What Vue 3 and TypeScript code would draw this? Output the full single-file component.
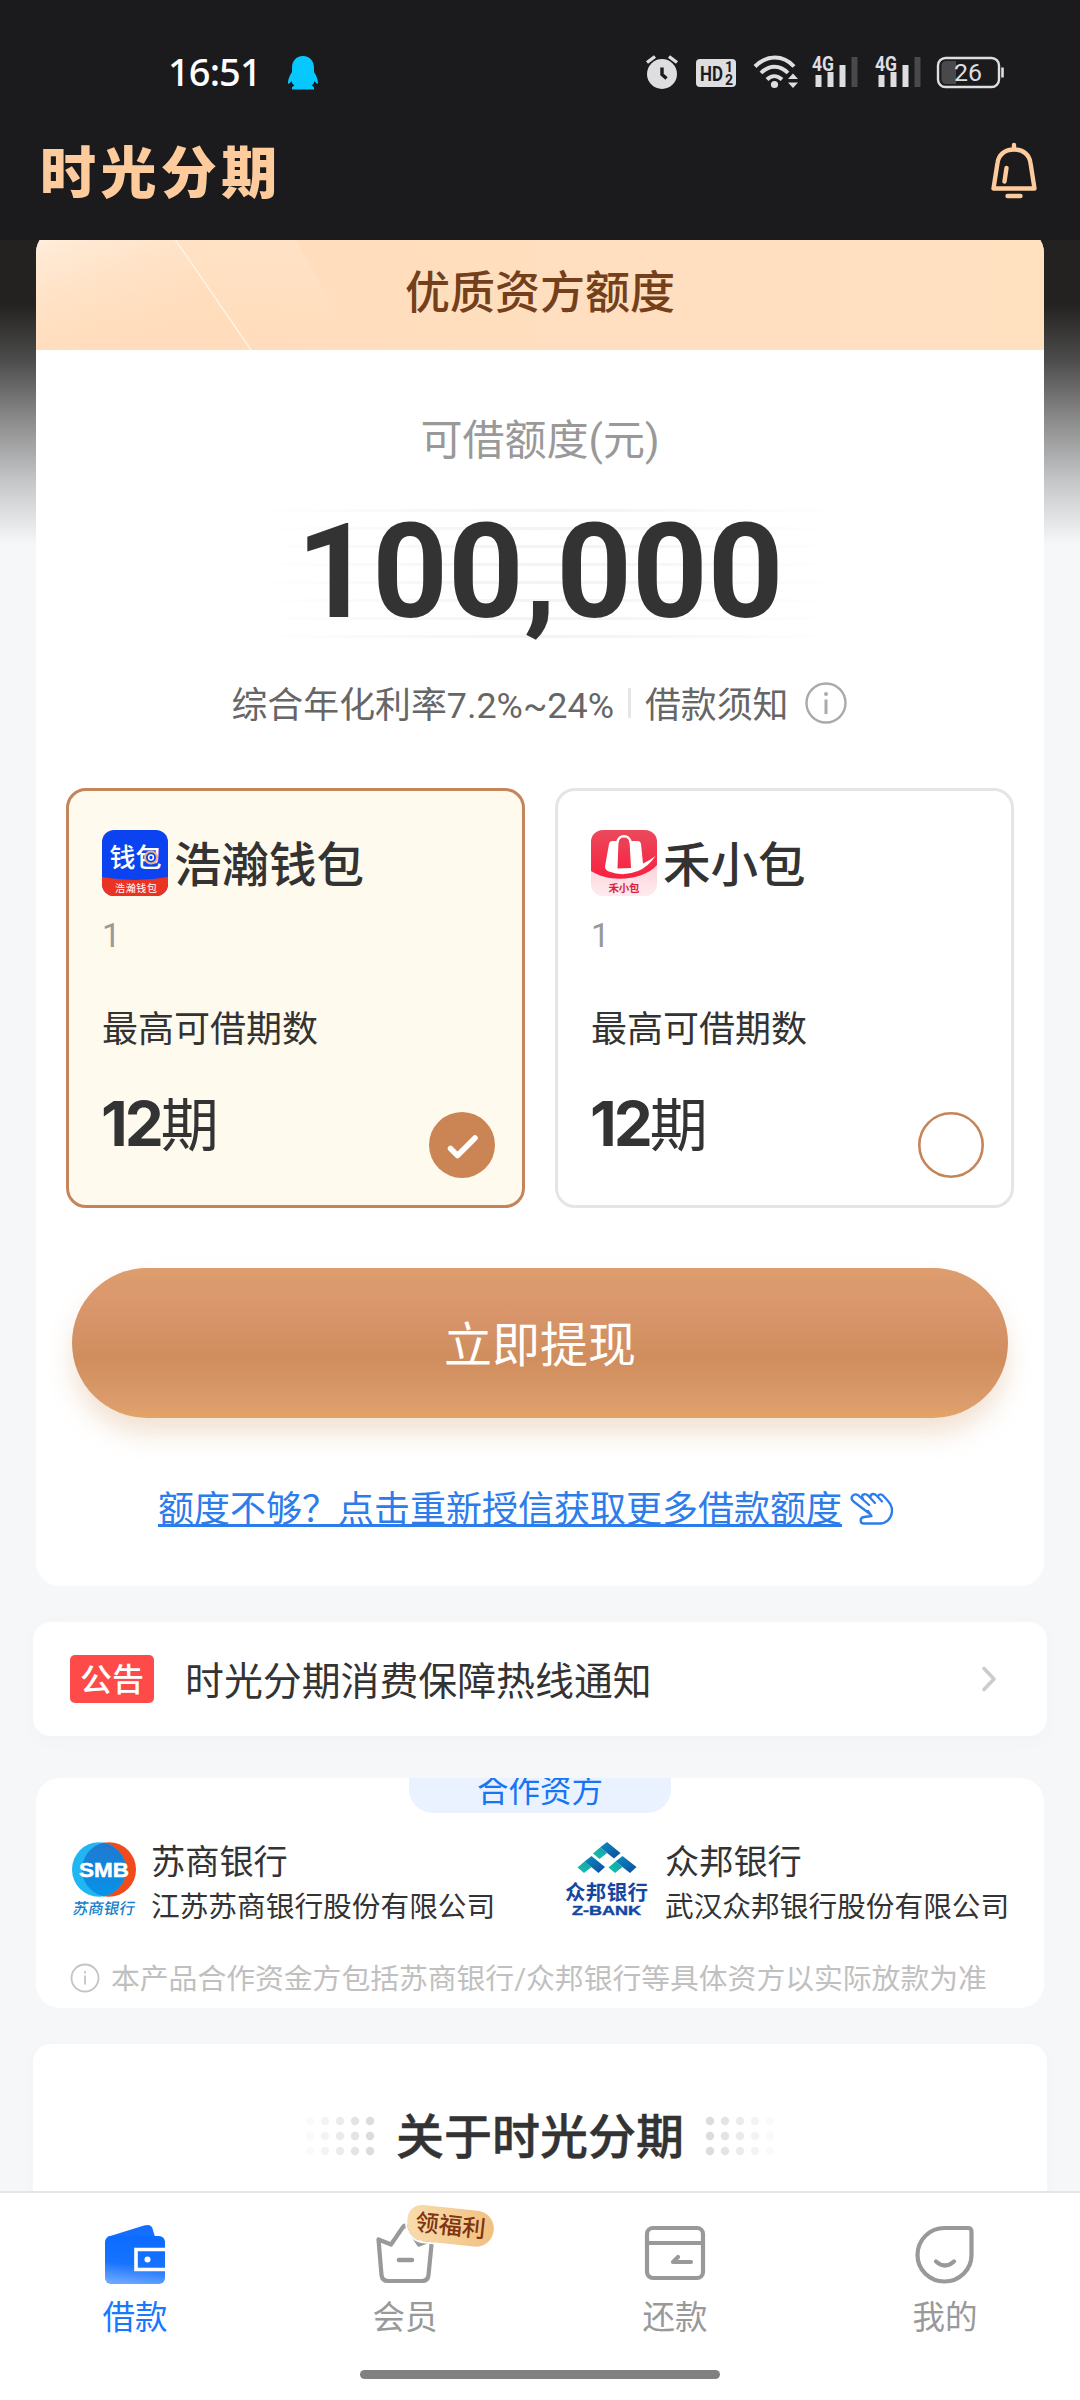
<script setup lang="ts">
interface Lender {
  id: string
  name: string
  remark: string
  periods: number
}

interface Tab {
  id: string
  label: string
  badge?: string
}

const lenders: Lender[] = [
  { id: 'haohan', name: '浩瀚钱包', remark: '1', periods: 12 },
  { id: 'hexiao', name: '禾小包', remark: '1', periods: 12 },
]
const selected = 'haohan'

const tabs: Tab[] = [
  { id: 'loan', label: '借款' },
  { id: 'vip', label: '会员', badge: '领福利' },
  { id: 'repay', label: '还款' },
  { id: 'mine', label: '我的' },
]
const activeTab = 'loan'

const amountLines = [0, 1, 2, 3, 4, 5, 6, 7]
const dotCols = [0, 1, 2, 3, 4]
const dotRows = [0, 1, 2]
const dotOpacity = [0.12, 0.3, 0.5, 0.7, 0.9]
</script>

<template>
  <div class="page">
    <header class="top">
      <div class="status">
        <span class="time">16:51</span>
        <svg class="qq" width="32" height="36" viewBox="0 0 32 36">
          <path d="M16 1C9 1 5 6 5 13v4C3 20 .8 24 1 28.500c1 .8 2.500-1 3.500-2.500.5 2 1.500 3.500 3 4.500-2 .8-3 1.800-2.500 4h22c.5-2.200-.5-3.200-2.500-4 1.500-1 2.500-2.500 3-4.500 1 1.500 2.500 3.300 3.500 2.500.2-4.500-2-8.500-4-11.500v-4C27 6 23 1 16 1z" fill="#06c8ff" />
        </svg>
        <svg class="sys" width="366" height="40" viewBox="0 0 366 40">
          <g fill="#dedee0">
            <circle cx="20" cy="24" r="15" />
            <path d="M5 12.500L13 6.500M27 6.500L35 12.500" stroke="#dedee0" stroke-width="3.400" fill="none" />
            <path d="M20 17.500v7l4.500 4" stroke="#1b1b1d" stroke-width="3.400" fill="none" />
            <rect x="54" y="9" width="40" height="28" rx="4" />
            <text x="58" y="30.500" font-size="21" font-weight="700" fill="#1b1b1d" textLength="23" lengthAdjust="spacingAndGlyphs">HD</text>
            <text x="83" y="22" font-size="14" font-weight="700" fill="#1b1b1d">1</text>
            <text x="83" y="35" font-size="14" font-weight="700" fill="#1b1b1d">2</text>
            <g fill="none" stroke="#dedee0" stroke-width="4">
              <path d="M113 16.500c12-12 28-12 39 0" />
              <path d="M119 23c8-8.500 19-8.500 27 0" />
              <path d="M125 29.500c4.500-4.500 10-4.500 15 0" />
            </g>
            <circle cx="132.500" cy="34.500" r="3.600" />
            <path d="M146 29l5-5.500 5 5.500zM146 32.500h10l-5 5.500z" />
            <g v-for="x in [170, 233]" :key="x">
              <text :x="x" y="21" font-size="21" font-weight="700" textLength="22" lengthAdjust="spacingAndGlyphs">4G</text>
              <rect :x="x + 3.500" y="25" width="6" height="12" />
              <rect :x="x + 15.500" y="22" width="6" height="15" />
              <rect :x="x + 27.500" y="15" width="6" height="22" />
              <rect :x="x + 39.500" y="7" width="6" height="30" fill="#49494b" />
            </g>
            <rect x="296" y="8" width="61" height="29" rx="7.500" fill="none" stroke="#dedee0" stroke-width="2.400" />
            <path d="M304 11h10v23h-10a4.500 4.500 0 0 1-4.500-4.500v-14A4.500 4.500 0 0 1 304 11z" fill="#49494b" />
            <path d="M360.500 17.500v10" stroke="#dedee0" stroke-width="2.600" />
            <text x="312" y="31" font-size="24" textLength="28" lengthAdjust="spacingAndGlyphs">26</text>
          </g>
        </svg>
      </div>
      <div class="title-row">
        <h1>时光分期</h1>
        <svg width="48" height="58" viewBox="0 0 48 58" fill="none" stroke="#fdcb9c" stroke-width="4.400" stroke-linecap="round" stroke-linejoin="round">
          <path d="M24 4v4M24 8.500c-9.500 0-15.500 5.500-16.500 13.500L3.500 47.500h41L40.500 22C39.500 14 33.500 8.500 24 8.500zM16.500 27L14.500 40.500" />
          <path d="M17.500 55h13" />
        </svg>
      </div>
    </header>

    <main class="content">
      <section class="card quota">
        <div class="banner">
          <svg class="shine" width="360" height="121" viewBox="0 0 360 121">
            <defs>
              <linearGradient id="shineA" x1="0" y1="0" x2="0.7" y2="1">
                <stop offset="0" stop-color="#fff" stop-opacity=".55" />
                <stop offset="1" stop-color="#ffdcba" stop-opacity="0" />
              </linearGradient>
              <linearGradient id="shineB" x1="0.3" y1="0" x2="0.3" y2="1">
                <stop offset="0" stop-color="#fff" stop-opacity=".16" />
                <stop offset=".9" stop-color="#fff" stop-opacity="0" />
              </linearGradient>
            </defs>
            <path d="M0 0H132L215 121H0z" fill="url(#shineA)" />
            <path d="M132 0H254L320 121H215z" fill="url(#shineB)" />
            <path d="M132 0L215 121" stroke="#fff3e2" stroke-width="1.500" />
          </svg>
          <span>优质资方额度</span>
        </div>
        <p class="quota-label">可借额度(元)</p>
        <div class="amount">
          <div class="lines"><i v-for="l in amountLines" :key="l" /></div>
          <strong>100,000</strong>
        </div>
        <div class="rate">
          <span>综合年化利率7.2%~24%</span>
          <i class="sep" />
          <span>借款须知</span>
          <svg width="42" height="42" viewBox="0 0 42 42" fill="none" stroke="#aaa">
            <circle cx="21" cy="21" r="19.500" stroke-width="2.400" />
            <path d="M21 17.500v14.500" stroke-width="3" />
            <circle cx="21" cy="12" r="2" fill="#aaa" stroke="none" />
          </svg>
        </div>

        <div class="lenders">
          <article v-for="l in lenders" :key="l.id" class="lender" :class="{ on: l.id === selected }">
            <div class="lender-head">
              <svg v-if="l.id === 'haohan'" width="66" height="66" viewBox="0 0 66 66">
                <clipPath id="appA"><rect width="66" height="66" rx="12" /></clipPath>
                <g clip-path="url(#appA)">
                  <rect width="66" height="66" fill="#0b43f0" />
                  <path d="M0 47Q33 53 66 47V66H0z" fill="#ea3323" />
                  <text x="7.500" y="36.500" font-size="26" font-weight="500" fill="#fff" textLength="52">钱包</text>
                  <circle cx="49" cy="27.500" r="6" fill="#0b43f0" stroke="#f2b07a" stroke-width="2" />
                  <circle cx="49" cy="27.500" r="2.400" fill="none" stroke="#fff" stroke-width="1.500" />
                  <text x="13" y="62" font-size="10" fill="#fff" textLength="42">浩瀚钱包</text>
                </g>
              </svg>
              <svg v-else width="66" height="66" viewBox="0 0 66 66">
                <defs>
                  <clipPath id="appB"><rect width="66" height="66" rx="12" /></clipPath>
                  <linearGradient id="red" x1="0" y1="0" x2="0" y2="1">
                    <stop offset="0" stop-color="#e94a5c" />
                    <stop offset="1" stop-color="#fa1f3f" />
                  </linearGradient>
                  <linearGradient id="pink" x1="0" y1="0" x2="0" y2="1">
                    <stop offset="0" stop-color="#fdb9c4" />
                    <stop offset="1" stop-color="#fdebee" />
                  </linearGradient>
                </defs>
                <g clip-path="url(#appB)">
                  <rect width="66" height="66" fill="url(#pink)" />
                  <path d="M0 0H66V35C52 51 18 53 0 41z" fill="url(#red)" />
                  <path d="M18 14q.5-3 3.500-3h6l-1 27.500 13.500-.5L38.500 11h8q3 0 3.500 3l2 19.500Q58 31 64.500 26 57 37 47 41 32 47 18 41.500q-4-1.500-4-5z" fill="#fff" />
                  <path d="M26.500 13c0-9 13-9 13 0" fill="none" stroke="#fff" stroke-width="2.400" />
                  <path d="M29.500 9h7v4h-7z" fill="#ea3f55" />
                  <text x="17.500" y="62" font-size="10.500" font-weight="700" fill="#d92341" textLength="31">禾小包</text>
                </g>
              </svg>
              <h2>{{ l.name }}</h2>
            </div>
            <p class="remark">{{ l.remark }}</p>
            <p class="term-label">最高可借期数</p>
            <div class="term">
              <p><b>{{ l.periods }}</b>期</p>
              <svg width="66" height="66" viewBox="0 0 66 66" fill="none">
                <template v-if="l.id === selected">
                  <circle cx="33" cy="33" r="33" fill="#cb8555" />
                  <path d="M21.500 36.500L28.500 43.500 46 26" stroke="#fff" stroke-width="5.500" stroke-linecap="round" stroke-linejoin="round" />
                </template>
                <circle v-else cx="33" cy="33" r="31.700" stroke="#c5855a" stroke-width="2.600" />
              </svg>
            </div>
          </article>
        </div>

        <button class="cta">立即提现</button>

        <div class="more">
          <a>额度不够？点击重新授信获取更多借款额度</a>
          <svg width="44" height="34" viewBox="0 0 44 34" fill="none" stroke="#2c7cec" stroke-width="2.300" stroke-linecap="round" stroke-linejoin="round">
            <path d="M20 22L3.500 9.500C-1 5 4 .5 8.500 3.500L19 13M13 7c-3-4.500 2-6 5-3.500l7 7.500M20.500 5c0-4 4-3.500 6-1.500l5.500 6M28 4.500c1-3 4-2.500 6 0C38 9 43 13.500 42 20c-1 7-6 11.500-12 11.500H14c-4.500 0-4.500-6 0-6.500l7.500-1L18 19" />
          </svg>
        </div>
      </section>

      <section class="wide notice">
        <span class="tag">公告</span>
        <p>时光分期消费保障热线通知</p>
        <svg width="18" height="28" viewBox="0 0 18 28" fill="none" stroke="#ccc" stroke-width="3.600" stroke-linecap="round" stroke-linejoin="round"><path d="M4 3.500L14 14 4 24.500" /></svg>
      </section>

      <section class="card partners">
        <div class="partner-tab"><span>合作资方</span></div>
        <div class="partner-row">
          <div class="partner first">
            <svg width="68" height="78" viewBox="0 0 68 78">
              <defs>
                <linearGradient id="smb" x1="0" y1="0" x2="0" y2="1"><stop offset="0" stop-color="#2078d0" /><stop offset="1" stop-color="#0693e8" /></linearGradient>
              </defs>
              <ellipse cx="39" cy="28.500" rx="27" ry="27.300" fill="#f04a1d" />
              <ellipse cx="29" cy="28.500" rx="27" ry="27.300" fill="#20b6f2" />
              <path d="M34 1.700C46 4 56 15 56 28.500S46 53 34 55.300C22 53 12 42 12 28.500S22 4 34 1.700z" fill="url(#smb)" />
              <text class="latin" x="9" y="36" font-size="21" font-weight="700" fill="#fff" stroke="#fff" stroke-width=".5" textLength="50" lengthAdjust="spacingAndGlyphs">SMB</text>
              <text x="2" y="73.500" font-size="15.500" font-weight="500" fill="#1780c8" transform="translate(13 0) skewX(-10)" textLength="62">苏商银行</text>
            </svg>
            <div>
              <h3>苏商银行</h3>
              <p>江苏苏商银行股份有限公司</p>
            </div>
          </div>
          <div class="partner second">
            <svg width="84" height="78" viewBox="0 0 84 78">
              <defs>
                <linearGradient id="zb" x1="0" y1="0" x2="1" y2="1"><stop offset="0" stop-color="#0b8fc0" /><stop offset="1" stop-color="#0d4a9e" /></linearGradient>
                <linearGradient id="zg" x1="1" y1="0" x2="0" y2="1"><stop offset="0" stop-color="#12a0b5" /><stop offset="1" stop-color="#16c3a0" /></linearGradient>
              </defs>
              <path d="M42 1L55.500 12 49 17.500 35 6.500z" fill="url(#zb)" />
              <path d="M35 6.500L42 12 34.500 18 28 12.500z" fill="url(#zg)" />
              <path d="M26.500 15L40 26 33.500 32 19.500 20.500z" fill="url(#zb)" />
              <path d="M19.500 20.500L26.500 26 19 32 12.500 26.500z" fill="url(#zg)" />
              <path d="M57.500 15L71.500 26 65 32 50.500 20.500z" fill="url(#zb)" />
              <path d="M50.500 20.500L57.500 26 50 32 43.500 26.500z" fill="url(#zg)" />
              <text x="0" y="59" font-size="20.500" font-weight="700" fill="#1347a0" textLength="83">众邦银行</text>
              <text class="latin" x="7" y="73.500" font-size="13" font-weight="700" fill="#1347a0" stroke="#1347a0" stroke-width=".4" textLength="69" lengthAdjust="spacingAndGlyphs">Z-BANK</text>
            </svg>
            <div>
              <h3>众邦银行</h3>
              <p>武汉众邦银行股份有限公司</p>
            </div>
          </div>
        </div>
        <div class="hint">
          <svg width="30" height="30" viewBox="0 0 30 30" fill="none" stroke="#c4c4c4" stroke-width="1.800">
            <circle cx="15" cy="15" r="13.500" />
            <path d="M15 12.500v9M15 8v2.400" />
          </svg>
          <span>本产品合作资金方包括苏商银行/众邦银行等具体资方以实际放款为准</span>
        </div>
      </section>

      <section class="wide about">
        <svg width="72" height="40" viewBox="0 0 72 40" fill="#d8d8d8">
          <template v-for="c in dotCols" :key="c">
            <circle v-for="r in dotRows" :key="r" :cx="6 + c * 15" :cy="5 + r * 15" r="4.200" :opacity="dotOpacity[c]" />
          </template>
        </svg>
        <h2>关于时光分期</h2>
        <svg width="72" height="40" viewBox="0 0 72 40" fill="#d8d8d8">
          <template v-for="c in dotCols" :key="c">
            <circle v-for="r in dotRows" :key="r" :cx="6 + c * 15" :cy="5 + r * 15" r="4.200" :opacity="dotOpacity[4 - c]" />
          </template>
        </svg>
      </section>
    </main>

    <nav class="tabbar">
      <div class="tabs">
        <div v-for="t in tabs" :key="t.id" class="tab" :class="{ active: t.id === activeTab }">
          <div class="tab-icon">
            <svg v-if="t.id === 'loan'" width="66" height="64" viewBox="0 0 66 64">
              <defs>
                <linearGradient id="wal" x1=".6" y1="0" x2=".45" y2="1">
                  <stop offset="0" stop-color="#0b6bff" />
                  <stop offset=".6" stop-color="#1773ff" />
                  <stop offset="1" stop-color="#6ba6ff" />
                </linearGradient>
              </defs>
              <path d="M5 15L42 3.500q7-2 8.500 3L53 15z" fill="#146fff" />
              <rect x="3" y="14" width="60" height="48" rx="6" fill="url(#wal)" />
              <path d="M64 27.500H34v20h30" fill="none" stroke="#fff" stroke-width="3.600" />
              <circle cx="45.500" cy="37.500" r="3" fill="#fff" />
            </svg>
            <svg v-else-if="t.id === 'vip'" width="66" height="64" viewBox="0 0 66 64" fill="none" stroke="#999" stroke-width="4.200" stroke-linejoin="round" stroke-linecap="round">
              <path d="M6.500 17.500L9.500 53q.6 6 6.500 6h34q6 0 6.500-6L60 17.500 47 22.500 35 5q-2-3-4 0L19 22.500z" />
              <path d="M27 38h13" stroke-width="4.600" />
            </svg>
            <svg v-else-if="t.id === 'repay'" width="66" height="64" viewBox="0 0 66 64" fill="none" stroke="#999" stroke-width="4.200" stroke-linejoin="round" stroke-linecap="round">
              <rect x="5" y="6" width="56" height="50" rx="6" />
              <path d="M5 21h56" />
              <path d="M49 40H31l5-5" />
            </svg>
            <svg v-else width="66" height="64" viewBox="0 0 66 64" fill="none" stroke="#999" stroke-width="4.200" stroke-linejoin="round" stroke-linecap="round">
              <path d="M32.500 6H56q3.500 0 3.500 3.500V33a27 26.500 0 0 1-54 0C5.500 18 17.500 6 32.500 6z" />
              <path d="M24 39.500q9 8 18 0" />
            </svg>
            <span v-if="t.badge" class="badge">{{ t.badge }}</span>
          </div>
          <span class="tab-label">{{ t.label }}</span>
        </div>
      </div>
      <div class="home-bar" />
    </nav>
  </div>
</template>

<style>
body {
  background: #f6f7f9;
}
</style>

<style scoped>
* {
  box-sizing: border-box;
  margin: 0;
  padding: 0;
}

svg {
  display: block;
  flex: none;
  overflow: visible;
}

.latin {
  font-family: 'Liberation Sans', sans-serif;
}

.page {
  width: 1080px;
  height: 2400px;
  overflow: hidden;
  display: flex;
  flex-direction: column;
  background: #f6f7f9;
  font-family: Roboto, 'Noto Sans CJK SC', sans-serif;
  color: #333;
}

.top {
  position: relative;
  z-index: 1;
  flex: none;
  height: 240px;
  background: #1b1b1d;
}

.status {
  display: flex;
  align-items: flex-start;
  height: 140px;
  padding: 48px 72px 0 168px;
}

.time {
  width: 92px;
  font-family: 'Noto Sans', Roboto, sans-serif;
  font-size: 38px;
  font-weight: 500;
  line-height: 46px;
  letter-spacing: -0.9px;
  color: #fff;
  white-space: nowrap;
}

.qq {
  margin: 7px 0 0 27px;
}

.sys {
  margin: 2px 0 0 auto;
}

.title-row {
  display: flex;
  justify-content: space-between;
  padding: 0 42px 0 40px;
}

.title-row svg {
  margin-top: 1px;
}

h1 {
  margin-top: 2px;
  font-size: 56px;
  font-weight: 900;
  line-height: 64px;
  letter-spacing: 4.400px;
  color: #fdcb9c;
}

.content {
  flex: 1;
  min-height: 0;
  overflow: hidden;
  margin-top: -11px;
  padding: 0 33px;
  background: linear-gradient(#232220 0, #232220 75px, #4d4d4d 132px, #888 188px, #c4c5c7 251px, #f6f7f9 315px) no-repeat 0 0 / 100% 320px;
}

.card {
  margin: 0 3px;
  border-radius: 24px;
  background: #fff;
  overflow: hidden;
}

.quota {
  height: 1357px;
}

.banner {
  position: relative;
  height: 121px;
  display: flex;
  justify-content: center;
  background: linear-gradient(90deg, #ffdcba, #ffdfc0 60%, #ffe0bf);
  font-size: 45px;
  font-weight: 500;
  line-height: 66px;
  padding-top: 32px;
  color: #74401c;
}

.banner span {
  position: relative;
}

.shine {
  position: absolute;
  left: 0;
  top: 0;
}

.quota-label {
  margin-top: 60px;
  text-align: center;
  font-size: 42px;
  line-height: 62px;
  color: #999;
}

.amount {
  position: relative;
  height: 154px;
  margin-top: 23px;
  text-align: center;
}

.lines {
  position: absolute;
  left: 220px;
  right: 200px;
  top: 14px;
  display: flex;
  flex-direction: column;
  gap: 19px;
}

.lines i {
  height: 3px;
  background: linear-gradient(90deg, transparent, #f2f2f7 50%, transparent);
}

.lines {
  gap: 15px;
}

.amount strong {
  position: relative;
  font-size: 132px;
  font-weight: 700;
  line-height: 154px;
}

.rate {
  display: flex;
  align-items: center;
  justify-content: center;
  height: 54px;
  margin-top: 27px;
  padding-right: 2px;
  font-size: 35.900px;
  line-height: 54px;
  color: #666;
}

.rate span {
  padding-top: 6px;
}

.sep {
  width: 3px;
  height: 30px;
  margin: 0 14px 0 14px;
  background: #e6e6e6;
}

.rate svg {
  margin-left: 16px;
}

.lenders {
  display: flex;
  gap: 30px;
  padding: 0 30px;
  margin-top: 58px;
}

.lender {
  flex: 1;
  height: 420px;
  padding: 39px 27px 0 33px;
  border: 3px solid #e5e5e5;
  border-radius: 20px;
}

.lender.on {
  border-color: #c5855a;
  background: #fffaee;
}

.lender-head {
  display: flex;
  align-items: center;
  gap: 6px;
  height: 66px;
}

h2 {
  font-size: 48px;
  font-weight: 500;
  line-height: 66px;
}

.lender h2 {
  padding-top: 5px;
  font-size: 47.500px;
}

.remark {
  margin-top: 20px;
  font-size: 33px;
  line-height: 40px;
  color: #999;
}

.term-label {
  margin-top: 47px;
  font-size: 36px;
  line-height: 54px;
}

.term {
  display: flex;
  justify-content: space-between;
  margin-top: 24px;
}

.term p {
  padding-top: 5px;
  font-size: 58px;
  line-height: 76px;
  white-space: nowrap;
}

.term b {
  font-family: Inter, sans-serif;
  font-size: 62px;
  font-weight: 700;
  letter-spacing: -3px;
  margin-left: -1px;
}

.term svg {
  margin-top: 31px;
}

.cta {
  display: block;
  width: 936px;
  height: 150px;
  margin: 60px auto 0;
  padding-bottom: 4px;
  border: 0;
  border-radius: 75px;
  font: inherit;
  font-size: 48px;
  color: #fff;
  background: linear-gradient(#dd9d6e, #d9966c 28%, #d08d5d 60%, #dd9d6c 92%, #e4a365);
  box-shadow: 0 16px 24px rgba(205, 145, 90, 0.26);
}

.more {
  display: flex;
  align-items: center;
  margin-top: 65px;
  padding-left: 122px;
  height: 54px;
}

.more a {
  font-size: 36px;
  line-height: 54px;
  color: #2c7cec;
  text-decoration: underline;
  text-decoration-thickness: 3px;
  text-underline-offset: 2px;
}

.more svg {
  margin: -3px 0 0 8px;
}

.wide {
  border-radius: 18px;
  background: #fff;
  box-shadow: 0 4px 20px rgba(0, 0, 0, 0.025);
}

.notice {
  display: flex;
  align-items: center;
  height: 114px;
  margin-top: 36px;
  padding: 0 49px 0 37px;
}

.tag {
  width: 84px;
  height: 48px;
  border-radius: 5px;
  background: #ff4a4a;
  color: #fff;
  font-size: 32px;
  font-weight: 500;
  line-height: 50px;
  text-align: center;
}

.notice p {
  flex: 1;
  margin-left: 31px;
  padding-top: 6px;
  font-size: 38.900px;
  line-height: 58px;
}

.partners {
  height: 230px;
  margin-top: 42px;
}

.partner-tab {
  display: flex;
  justify-content: center;
  align-items: flex-start;
  width: 262px;
  height: 35px;
  margin: 0 auto;
  border-radius: 0 0 24px 24px;
  background: #ebf2ff;
  font-size: 31.500px;
  line-height: 27px;
  color: #1775f5;
}

.partner-row {
  display: flex;
  margin-top: 28px;
  height: 80px;
}

.partner {
  display: flex;
  flex: none;
  white-space: nowrap;
}

.first {
  width: 529px;
  padding-left: 34px;
}

.first > div {
  margin-left: 13px;
}

.second > div {
  margin-left: 16px;
}

h3 {
  margin-top: -1px;
  font-size: 34.200px;
  font-weight: 400;
  line-height: 44px;
}

.partner p {
  font-size: 28.700px;
  line-height: 36px;
  margin-top: 5px;
}

.hint {
  display: flex;
  align-items: center;
  gap: 11px;
  margin: 34px 0 0 34px;
  font-size: 28.800px;
  line-height: 42px;
  color: #c0c0c0;
  white-space: nowrap;
}

.hint span {
  padding-top: 3px;
}

.about {
  display: flex;
  justify-content: center;
  height: 300px;
  margin-top: 36px;
  padding-top: 58px;
}

.about h2 {
  margin: 0 20px;
  padding-top: 3px;
  -webkit-text-stroke: 0.5px #333;
}

.about svg {
  margin-top: 14px;
}

.tabbar {
  position: relative;
  z-index: 1;
  flex: none;
  height: 209px;
  border-top: 2px solid #e5e5e5;
  background: #fff;
}

.tabs {
  display: flex;
}

.tab {
  flex: 1;
  display: flex;
  flex-direction: column;
  align-items: center;
  padding-top: 29px;
  color: #999;
}

.tab.active {
  color: #1a78ff;
}

.tab-icon {
  position: relative;
  height: 64px;
}

.tab-label {
  margin-top: 7px;
  font-size: 32.500px;
  line-height: 50px;
}

.badge {
  position: absolute;
  left: 35px;
  top: -14px;
  width: 87px;
  height: 36px;
  border-radius: 14px 18px 18px 18px;
  background: linear-gradient(90deg, #f8dcae, #f2c080);
  box-shadow: 0 0 0 2px #fff;
  transform: rotate(6deg);
  font-size: 23.500px;
  font-weight: 500;
  line-height: 36px;
  text-align: center;
  color: #7d3410;
}

.home-bar {
  width: 360px;
  height: 9px;
  margin: 27px auto 0;
  border-radius: 5px;
  background: #808080;
}
</style>
